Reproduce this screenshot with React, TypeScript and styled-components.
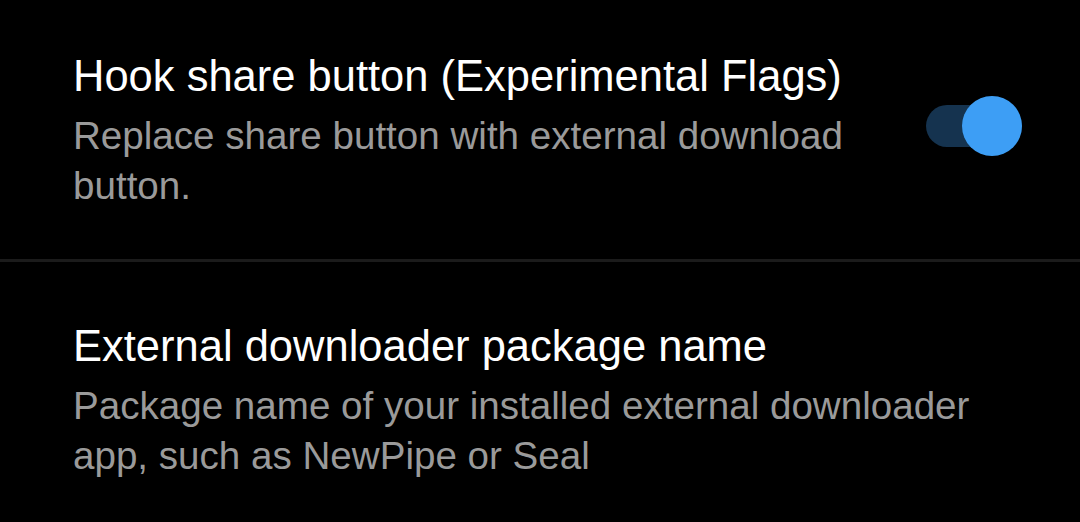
import React from "react";
import styled, { createGlobalStyle } from "styled-components";

const Global = createGlobalStyle`
  html, body { margin: 0; padding: 0; background: #000; }
  body { font-family: "Liberation Sans", Arial, sans-serif; }
`;

const Page = styled.div`
  width: 1080px;
  height: 522px;
  background: #000;
  display: flex;
  flex-direction: column;
  overflow: hidden;
`;

const Row = styled.div<{ $pt: number; $pb: number }>`
  display: flex;
  align-items: flex-start;
  padding: ${(p) => p.$pt}px 58px ${(p) => p.$pb}px 73px;
  gap: 40px;
`;

const Texts = styled.div`
  flex: 1;
  max-width: 910px;
  display: flex;
  flex-direction: column;
`;

const Title = styled.div`
  color: #ffffff;
  font-size: 43.5px;
  line-height: 52px;
  white-space: nowrap;
`;

const Sub = styled.div`
  color: #9a9a9a;
  font-size: 38.6px;
  line-height: 50px;
  margin-top: 9px;
`;

const Divider = styled.div`
  height: 3px;
  background: #1b1b1b;
`;

const Track = styled.div`
  position: relative;
  flex: none;
  width: 96px;
  height: 42px;
  margin-top: 55px;
  border-radius: 21px;
  background: #15334f;
`;

const Thumb = styled.div`
  position: absolute;
  right: 0;
  top: -9px;
  width: 60px;
  height: 60px;
  border-radius: 50%;
  background: #3d9ef5;
`;

export default function App() {
  return (
    <Page>
      <Global />
      <Row $pt={50} $pb={48}>
        <Texts>
          <Title>Hook share button (Experimental Flags)</Title>
          <Sub>Replace share button with external download button.</Sub>
        </Texts>
        <Track>
          <Thumb />
        </Track>
      </Row>
      <Divider />
      <Row $pt={58} $pb={40}>
        <Texts>
          <Title>External downloader package name</Title>
          <Sub>Package name of your installed external downloader app, such as NewPipe or Seal</Sub>
        </Texts>
      </Row>
    </Page>
  );
}
